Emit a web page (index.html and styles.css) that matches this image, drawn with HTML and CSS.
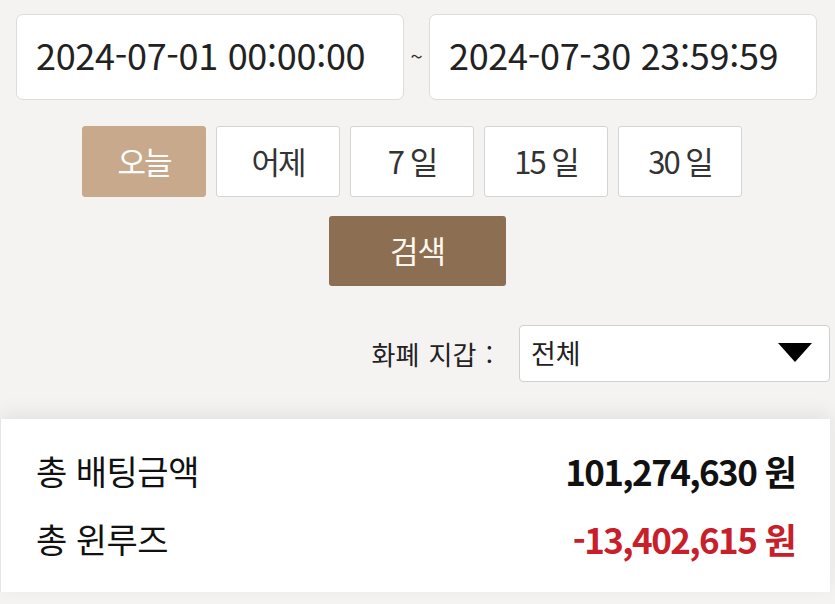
FILE: index.html
```html
<!DOCTYPE html>
<html lang="ko">
<head>
<meta charset="utf-8">
<link rel="stylesheet" href="styles.css">
</head>
<body>
<div class="dates">
  <div class="date-box">2024-07-01 00:00:00</div>
  <span class="tilde">~</span>
  <div class="date-box">2024-07-30 23:59:59</div>
</div>
<div class="quick">
  <button class="qbtn active">오늘</button>
  <button class="qbtn">어제</button>
  <button class="qbtn">7 일</button>
  <button class="qbtn">15 일</button>
  <button class="qbtn">30 일</button>
</div>
<div class="search-row">
  <button class="search">검색</button>
</div>
<div class="wallet">
  <span class="wallet-label">화폐 지갑 :</span>
  <div class="select"><span>전체</span><i class="caret"></i></div>
</div>
<div class="card">
  <div class="row"><span class="label">총 배팅금액</span><span class="value">101,274,630 원</span></div>
  <div class="row"><span class="label">총 윈루즈</span><span class="value neg">-13,402,615 원</span></div>
</div>
</body>
</html>
```
FILE: styles.css
```css
html, body {
  margin: 0;
  padding: 0;
  background: #f4f3f1;
  font-family: "Noto Sans CJK KR", "Noto Sans", sans-serif;
  color: #222;
  height: 604px;
  overflow: hidden;
}
.dates {
  display: flex;
  align-items: center;
  padding: 14px 0 0 16px;
}
.date-box {
  box-sizing: border-box;
  width: 388px;
  height: 86px;
  background: #fff;
  border: 1px solid #dcdcdc;
  border-radius: 7px;
  display: flex;
  align-items: center;
  padding: 0 0 6px 19px;
  font-size: 36px;
  letter-spacing: -0.3px;
  color: #222;
}
.tilde {
  width: 25px;
  text-align: center;
  font-size: 22px;
  color: #333;
  padding-bottom: 4px;
}
.quick {
  display: flex;
  gap: 10px;
  padding-left: 82px;
  margin-top: 26px;
}
.qbtn {
  box-sizing: border-box;
  width: 124px;
  height: 71px;
  background: #fff;
  border: 1px solid #d4d4d4;
  border-radius: 3px;
  font-family: inherit;
  font-size: 31px;
  color: #333;
  letter-spacing: -2px;
  padding: 0 0 3px;
}
.qbtn.active {
  background: #c9a98b;
  border-color: #c9a98b;
  color: #fff;
}
.search-row {
  display: flex;
  justify-content: center;
  margin-top: 19px;
}
.search {
  box-sizing: border-box;
  width: 177px;
  height: 70px;
  background: #8c6e53;
  border: none;
  border-radius: 3px;
  color: #fff8ee;
  font-family: inherit;
  font-size: 31px;
  letter-spacing: -1px;
  padding: 0 0 3px;
}
.wallet {
  display: flex;
  align-items: center;
  justify-content: flex-end;
  padding-right: 5px;
  margin-top: 39px;
}
.wallet-label {
  font-size: 26px;
  color: #222;
  margin-right: 26px;
  word-spacing: 2px;
}
.select {
  box-sizing: border-box;
  width: 311px;
  height: 57px;
  background: #fff;
  border: 1px solid #cfcfcf;
  border-radius: 4px;
  display: flex;
  align-items: center;
  justify-content: space-between;
  padding: 0 17px 2px 11px;
  font-size: 27px;
  color: #222;
}
.caret {
  width: 0;
  height: 0;
  border-left: 17px solid transparent;
  border-right: 17px solid transparent;
  border-top: 19px solid #000;
}
.card {
  margin-top: 37px;
  width: 830px;
  height: 173px;
  box-sizing: border-box;
  background: #fff;
  border-left: 1px solid #e6e6e6;
  box-shadow: 0 -6px 18px rgba(0, 0, 0, 0.07);
  padding: 17px 35px 0 35px;
}
.row {
  display: flex;
  justify-content: space-between;
  align-items: center;
  height: 68px;
}
.label {
  font-size: 34px;
  color: #111;
  letter-spacing: -0.5px;
}
.value {
  font-size: 35px;
  font-weight: 700;
  color: #111;
  letter-spacing: -1.6px;
}
.value.neg {
  color: #c8202b;
}
```
